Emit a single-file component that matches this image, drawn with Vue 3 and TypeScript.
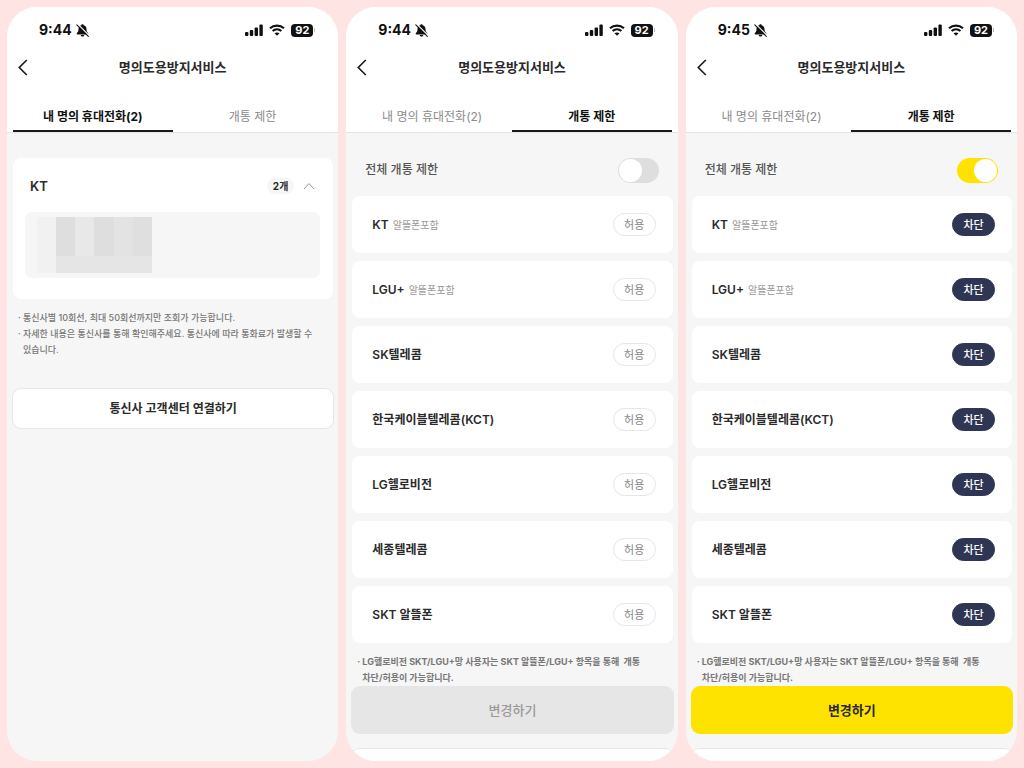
<script setup lang="ts">
import { reactive } from 'vue'

interface Carrier {
  name: string
  note?: string
}

interface Screen {
  id: string
  time: string
  tab: 'phones' | 'limit'
  blocked: boolean
}

const carriers: Carrier[] = [
  { name: 'KT', note: '알뜰폰포함' },
  { name: 'LGU+', note: '알뜰폰포함' },
  { name: 'SK텔레콤' },
  { name: '한국케이블텔레콤(KCT)' },
  { name: 'LG헬로비전' },
  { name: '세종텔레콤' },
  { name: 'SKT 알뜰폰' },
]

const screens = reactive<Screen[]>([
  { id: 'a', time: '9:44', tab: 'phones', blocked: false },
  { id: 'b', time: '9:44', tab: 'limit', blocked: false },
  { id: 'c', time: '9:45', tab: 'limit', blocked: true },
])
</script>

<template>
  <main class="board">
    <section v-for="s in screens" :key="s.id" class="phone">
      <header class="top">
        <div class="status">
          <span class="time">{{ s.time }}</span>
          <svg class="bell" width="13" height="13" viewBox="0 0 13 13" aria-hidden="true">
            <path d="M6.5 0.3c-.7 0-1.200.4-1.200 1C3.300 1.800 2.500 3.300 2.500 5c0 2.300-.6 3.100-1.600 4.100-.5.500-.2 1.400.6 1.400h10c.8 0 1.100-.9.600-1.400C11.100 8.100 10.500 7.300 10.500 5c0-1.700-.8-3.200-2.800-3.700 0-.6-.5-1-1.200-1z" fill="#111" />
            <path d="M4.700 11h3.600c-.2 1-.9 1.600-1.800 1.600S4.900 12 4.700 11z" fill="#111" />
            <path d="M1.900 0.300l11 11" stroke="#fff" stroke-width="1.100" />
            <path d="M0.800 0.800l11.500 11.500" stroke="#111" stroke-width="1.100" stroke-linecap="round" />
          </svg>
          <span class="spacer"></span>
          <svg width="18" height="12" viewBox="0 0 18 12" aria-hidden="true">
            <rect x="0" y="8" width="3.400" height="4" rx="1" fill="#111" />
            <rect x="4.800" y="6" width="3.400" height="6" rx="1" fill="#111" />
            <rect x="9.600" y="3.500" width="3.400" height="8.500" rx="1" fill="#111" />
            <rect x="14.400" y="0.500" width="3.400" height="11.500" rx="1" fill="#111" />
          </svg>
          <svg class="wifi" width="16" height="12" viewBox="0 0 16 12" fill="none" stroke="#111" aria-hidden="true">
            <path d="M1 4.300C5 .6 11 .6 15 4.300" stroke-width="2.200" />
            <path d="M3.600 7c2.600-2.300 6.200-2.300 8.800 0" stroke-width="2.100" />
            <path d="M8 11.700L5.500 9.300c1.500-1.200 3.500-1.200 5 0z" fill="#111" stroke="none" />
          </svg>
          <span class="battery">92</span>
        </div>
        <div class="titlebar">
          <button class="back" type="button" aria-label="뒤로">
            <svg width="10" height="17" viewBox="0 0 10 17" fill="none" aria-hidden="true">
              <path d="M8.800 1L1.300 8.500l7.500 7.500" stroke="#1c1c1c" stroke-width="1.700" />
            </svg>
          </button>
          <h1>명의도용방지서비스</h1>
        </div>
        <nav class="tabs">
          <button type="button" :class="{ active: s.tab === 'phones' }" @click="s.tab = 'phones'">내 명의 휴대전화(2)</button>
          <button type="button" :class="{ active: s.tab === 'limit' }" @click="s.tab = 'limit'">개통 제한</button>
        </nav>
      </header>

      <div v-if="s.tab === 'phones'" class="body phones">
        <article class="account">
          <div class="account-head">
            <h2>KT</h2>
            <span class="count">2개</span>
            <button class="fold" type="button" aria-label="접기">
              <svg width="12" height="8" viewBox="0 0 12 8" fill="none" aria-hidden="true">
                <path d="M1 7l5-5.500L11 7" stroke="#999" stroke-width="1" />
              </svg>
            </button>
          </div>
          <div class="lines">
            <svg width="116" height="56" viewBox="0 0 116 56" shape-rendering="crispEdges" aria-hidden="true">
              <rect x="0" y="0" width="19" height="56" fill="#f1f1f1" />
              <rect x="19" y="0" width="96" height="56" fill="#e5e5e5" />
              <rect x="19" y="0" width="19" height="39" fill="#dedede" />
              <rect x="38" y="0" width="19" height="39" fill="#e8e8e8" />
              <rect x="57" y="0" width="20" height="39" fill="#dedede" />
              <rect x="77" y="0" width="19" height="39" fill="#e3e3e3" />
              <rect x="96" y="0" width="19" height="39" fill="#dfdfdf" />
            </svg>
          </div>
        </article>
        <ul class="notes">
          <li>통신사별 10회선, 최대 50회선까지만 조회가 가능합니다.</li>
          <li>자세한 내용은 통신사를 통해 확인해주세요. 통신사에 따라 통화료가 발생할 수 있습니다.</li>
        </ul>
        <button class="connect" type="button">통신사 고객센터 연결하기</button>
      </div>

      <div v-else class="body limit">
        <label class="all">
          <span>전체 개통 제한</span>
          <input v-model="s.blocked" class="switch" type="checkbox" />
        </label>
        <ul class="carriers">
          <li v-for="c in carriers" :key="c.name">
            <span class="name">{{ c.name }}</span>
            <small v-if="c.note">{{ c.note }}</small>
            <button type="button" class="pill" :class="{ on: s.blocked }">{{ s.blocked ? '차단' : '허용' }}</button>
          </li>
        </ul>
        <ul class="notes strong">
          <li><p>LG헬로비전 SKT/LGU+망 사용자는 SKT 알뜰폰/LGU+ 항목을 통해 &nbsp;개통 <span class="keep">차단/허용이</span> 가능합니다.</p></li>
        </ul>
        <button class="submit" type="button" :disabled="!s.blocked">변경하기</button>
        <div class="next-card"></div>
      </div>
    </section>
  </main>
</template>

<style>
body {
  margin: 0;
  background: #ffe4e4;
}
</style>

<style scoped>
* {
  box-sizing: border-box;
}

.board {
  display: grid;
  grid-template-columns: repeat(3, minmax(0, 1fr));
  gap: 8px;
  min-height: 100vh;
  padding: 7px;
  background: #ffe4e4;
  color: #2a2a2a;
  font-family: Inter, "Noto Sans CJK KR", sans-serif;
  font-size: 12px;
  line-height: 16px;
  word-break: keep-all;
}

button {
  margin: 0;
  padding: 0;
  border: 0;
  background: none;
  color: inherit;
  font: inherit;
  cursor: pointer;
}

h1,
h2,
p,
ul {
  margin: 0;
  padding: 0;
  list-style: none;
}

.phone {
  display: flex;
  flex-direction: column;
  overflow: hidden;
  border-radius: 30px;
  background: #f6f6f6;
}

.top {
  background: #fff;
}

.status {
  display: flex;
  align-items: center;
  height: 46px;
  padding: 0 23px 0 32px;
}

.time {
  color: #111;
  font-size: 14px;
  font-weight: 700;
}

.bell {
  margin-left: 4px;
}

.spacer {
  flex: 1;
}

.wifi {
  margin: 0 6px;
}

.battery {
  position: relative;
  width: 22px;
  margin-right: 2px;
  border-radius: 4px;
  background: #111;
  color: #fff;
  font-size: 11px;
  font-weight: 700;
  line-height: 13px;
  text-align: center;
}

.battery::after {
  content: "";
  position: absolute;
  top: 4px;
  right: -2px;
  width: 1px;
  height: 4px;
  background: #bbb;
}

.titlebar {
  display: grid;
  grid-template-columns: 32px 1fr 32px;
  align-items: center;
  height: 28px;
}

.back {
  display: flex;
  padding-left: 11px;
}

h1 {
  font-size: 13px;
  font-weight: 600;
  text-align: center;
}

.tabs {
  display: flex;
  margin-top: 20px;
  padding: 0 6px;
  border-bottom: 1px solid #e4e4e4;
}

.tabs button {
  flex: 1;
  height: 31px;
  padding-top: 2px;
  border-bottom: 2px solid transparent;
  color: #8a8a8a;
}

.tabs .active {
  border-color: #1a1a1a;
  color: #111;
  font-weight: 700;
}

.body {
  display: flex;
  flex: 1;
  flex-direction: column;
}

.phones {
  padding: 25px 4px 0 5px;
}

.account {
  margin: 0 1px;
  padding: 17px 13px 21px 12px;
  border-radius: 8px;
  background: #fff;
}

.account-head {
  display: flex;
  align-items: center;
  height: 21px;
  padding: 0 5px;
}

h2 {
  flex: 1;
  font-size: 13px;
  font-weight: 600;
}

.count {
  padding: 0 6px;
  border-radius: 8px;
  background: #f6f6f6;
  font-size: 10px;
  font-weight: 700;
}

.fold {
  display: flex;
  margin-left: 9px;
}

.lines {
  display: flex;
  margin-top: 16px;
  padding: 5px 12px;
  border-radius: 7px;
  background: #f6f6f6;
}

.notes {
  padding: 11px 6px 0;
  color: #777;
  font-size: 9px;
  font-weight: 500;
}

.notes li {
  display: flex;
}

.notes li::before {
  content: "·";
  flex: none;
  width: 5px;
}

.keep {
  white-space: nowrap;
}

.connect {
  height: 41px;
  margin-top: 30px;
  border: 1px solid #e6e6e6;
  border-radius: 9px;
  background: #fff;
  font-weight: 600;
}

.limit {
  padding: 14px 4px 0 5px;
}

.all {
  display: flex;
  align-items: center;
  justify-content: space-between;
  height: 46px;
  padding: 0 15px 0 14px;
  color: #555;
  font-weight: 500;
}

.switch {
  appearance: none;
  display: flex;
  width: 41px;
  height: 25px;
  margin: 0;
  padding: 1px;
  border-radius: 13px;
  background: #dedede;
  cursor: pointer;
}

.switch::before {
  content: "";
  width: 23px;
  height: 23px;
  border-radius: 50%;
  background: #fff;
}

.switch:checked {
  justify-content: flex-end;
  background: #ffe200;
}

.carriers {
  display: grid;
  gap: 8px;
  margin: 3px 1px 0;
}

.carriers li {
  display: flex;
  align-items: center;
  height: 57px;
  padding: 0 17px 0 20px;
  border-radius: 8px;
  background: #fff;
}

.name {
  font-weight: 600;
}

small {
  margin-left: 4px;
  color: #999;
  font-size: 10px;
}

.pill {
  width: 43px;
  height: 23px;
  margin-left: auto;
  border: 1px solid #e6e6e6;
  border-radius: 12px;
  color: #888;
  font-size: 11px;
}

.pill.on {
  border-color: #2f3654;
  background: #2f3654;
  color: #fff;
  font-weight: 500;
}

.notes.strong {
  font-weight: 700;
}

.submit {
  height: 48px;
  border-radius: 9px;
  background: #ffe300;
  font-size: 13px;
  font-weight: 600;
}

.submit:disabled {
  background: #e6e6e6;
  color: #999;
  font-weight: 500;
}

.next-card {
  flex: 1;
  min-height: 13px;
  margin-top: 14px;
  border-top: 1px solid #e6e6e6;
  border-radius: 9px 9px 0 0;
  background: #fff;
}
</style>
